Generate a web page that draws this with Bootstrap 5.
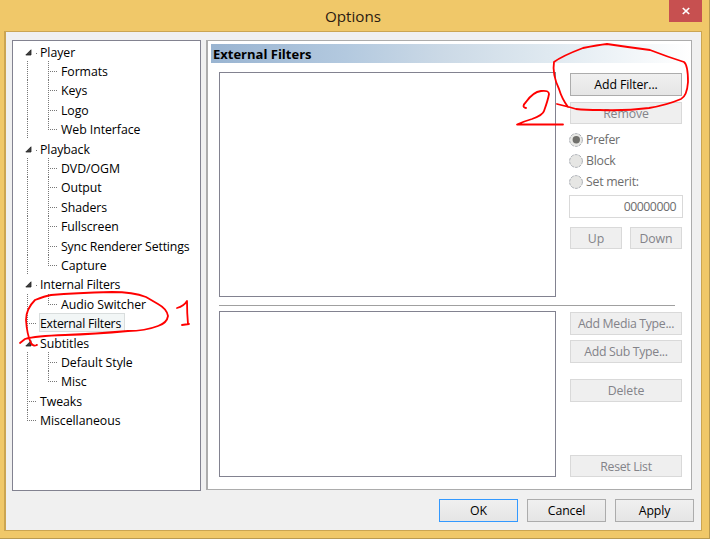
<!DOCTYPE html>
<html lang="en">
<head>
<meta charset="utf-8">
<title>Options</title>
<link href="https://cdn.jsdelivr.net/npm/bootstrap@5.3.0/dist/css/bootstrap.min.css" rel="stylesheet">
<style>
body{width:710px;height:539px;overflow:hidden;font:12.3px/19px "Open Sans","Noto Sans",sans-serif;color:#000;background:#f0c869}
.window{width:710px;height:539px;background:#f0c869;border:solid #b99a51;border-width:0 1px 1px 0}
.titlebar{height:31px}
.caption{font-size:15.2px;line-height:32px;padding-left:325px;color:#2b1b12}
.close-box{width:33px;height:22px;margin-right:7px;background:#c75050}
.client{height:500px;margin:0 7px 0 4px;background:#f0f0f0;border:1px solid #cba552;border-left-width:2px;padding:8px 7px 0 6px}
.tree{width:189px;height:451px;border:1px solid #828290;background:#fff;padding:1px 0 0 13px;letter-spacing:-.05px}
.tree li{height:19px;position:relative;white-space:nowrap;line-height:21px;padding-left:14px;--v:repeating-linear-gradient(#777 0 1px,transparent 1px 2px);--h:repeating-linear-gradient(90deg,#777 0 1px,transparent 1px 2px);background-repeat:no-repeat}
.tree li:nth-child(5n+3),.tree li:nth-child(5n){height:20px}
.tree .sub{padding-left:35px;background-image:var(--v),var(--v),var(--h);background-size:1px 100%,1px 100%,10px 1px;background-position:1px 0,22px 0,22px 10px}
.tree .sub.end{background-size:1px 100%,1px 11px,10px 1px}
.tree .leaf{background-image:var(--v),var(--h);background-size:1px 100%,10px 1px;background-position:1px 0,1px 10px}
.tree .leaf.end{background-size:1px 11px,10px 1px}
.tree .top{background-image:linear-gradient(#777,#777);background-size:1px 1px;background-position:10px 11px}
.tree .top svg{position:absolute;left:-1px;top:7px}
.tree .snug{letter-spacing:-.15px}
.picked{background:#f2f6f6;box-shadow:0 0 0 1px #d9dddd;display:inline-block;height:17px;line-height:19px;padding:0 3px 0 0;margin-top:1px;vertical-align:top;letter-spacing:-.25px}
.page{width:486px;height:450px;margin-left:5px;border:1px solid #acacac;border-left-width:2px;background:#fff;padding:3px 0 0 3px}
.page-title{height:19px;line-height:21px;font-weight:700;font-size:13px;padding-left:2px;background:linear-gradient(90deg,#99b4d1,#b3c9df 28%,#cbd9e6 48%,#dfe9f0 70%,#fff)}
.body-area{padding:9px 8px 0}
.pane{width:337px;border:1px solid #828290}
.pane-a{height:225px}
.pane-b{height:166px}
.rule{height:1px;width:456px;background:#a0a0a0;margin:8px 0 5px}
.side{margin-left:14px;width:112px;padding-top:1px}
.btn.pb{--edge:#acacac;border:0;border-radius:0;padding:1px 0 0;font-size:12.3px;line-height:22px;height:23px;width:112px;box-shadow:inset 0 0 0 1px var(--edge);background:linear-gradient(#f0f0f0,#e5e5e5);color:#000;white-space:nowrap;letter-spacing:-.1px;transition:none}
.btn.pb:disabled{--edge:#d9d9d9;opacity:1;background:#efefef;color:#838389}
.btn.pb.low{height:22px;line-height:21px}
.btn.pb.tight{letter-spacing:-.32px}
.btn.pb.half{width:52px}
.btn.pb.act{width:79px}
.btn.pb.main{--edge:#3399ff}
.remove{margin-top:6px}
.choices{margin-top:5px}
.opt{height:21px;line-height:21px;color:#6d6d6d;letter-spacing:-.25px}
.dot{width:14px;height:14px;margin:0 3px 0 -1px}
.merit{width:114px;height:23px;border:1px solid #d9d9d9;margin:3px 0 9px -1px;text-align:right;line-height:22px;padding-right:6px;color:#6d6d6d;letter-spacing:-.5px}
.sub-type{margin-top:5px}
.actions{gap:9px}
.ink{position:absolute;left:0;top:0;pointer-events:none}
</style>
</head>
<body>
<div class="window">
  <div class="titlebar d-flex justify-content-between align-items-start">
    <div class="caption">Options</div>
    <div class="close-box d-flex align-items-center justify-content-center"><svg width="8" height="8" viewBox="0 0 8 8"><path d="M.8 1l6.4 6M7.2 1L.8 7" stroke="#fff" stroke-width="1.7"/></svg></div>
  </div>
  <div class="client">
    <div class="d-flex">
      <ul class="tree list-unstyled mb-0">
        <li class="top"><svg width="7" height="7"><path d="M6 .8V6H.8z" fill="#404040" stroke="#222" stroke-width=".8"/></svg>Player</li>
        <li class="sub">Formats</li>
        <li class="sub">Keys</li>
        <li class="sub">Logo</li>
        <li class="sub end">Web Interface</li>
        <li class="top"><svg width="7" height="7"><path d="M6 .8V6H.8z" fill="#404040" stroke="#222" stroke-width=".8"/></svg>Playback</li>
        <li class="sub">DVD/OGM</li>
        <li class="sub">Output</li>
        <li class="sub">Shaders</li>
        <li class="sub">Fullscreen</li>
        <li class="sub snug">Sync Renderer Settings</li>
        <li class="sub end">Capture</li>
        <li class="top snug"><svg width="7" height="7"><path d="M6 .8V6H.8z" fill="#404040" stroke="#222" stroke-width=".8"/></svg>Internal Filters</li>
        <li class="sub end">Audio Switcher</li>
        <li class="leaf"><span class="picked">External Filters</span></li>
        <li class="top"><svg width="7" height="7"><path d="M6 .8V6H.8z" fill="#404040" stroke="#222" stroke-width=".8"/></svg>Subtitles</li>
        <li class="sub">Default Style</li>
        <li class="sub end">Misc</li>
        <li class="leaf">Tweaks</li>
        <li class="leaf end">Miscellaneous</li>
      </ul>
      <div class="page">
        <div class="page-title">External Filters</div>
        <div class="body-area">
          <div class="d-flex">
            <div class="pane pane-a"></div>
            <div class="side">
              <button class="btn pb d-block">Add Filter...</button>
              <button class="btn pb low d-block remove" disabled>Remove</button>
              <div class="choices">
                <div class="opt d-flex align-items-center"><svg class="dot" viewBox="0 0 14 14"><circle cx="7" cy="7" r="6.4" fill="#e9e9e6" stroke="#a9adb3" stroke-dasharray="3 1"/><circle cx="7.3" cy="6.8" r="3.7" fill="#70706c"/></svg>Prefer</div>
                <div class="opt d-flex align-items-center"><svg class="dot" viewBox="0 0 14 14"><circle cx="7" cy="7" r="6.4" fill="#e6e6e4" stroke="#a9adb3" stroke-dasharray="3 1"/></svg>Block</div>
                <div class="opt d-flex align-items-center"><svg class="dot" viewBox="0 0 14 14"><circle cx="7" cy="7" r="6.4" fill="#e6e6e4" stroke="#a9adb3" stroke-dasharray="3 1"/></svg>Set merit:</div>
              </div>
              <div class="merit">00000000</div>
              <div class="d-flex justify-content-between"><button class="btn pb low half" disabled>Up</button><button class="btn pb low half" disabled>Down</button></div>
            </div>
          </div>
          <div class="rule"></div>
          <div class="d-flex">
            <div class="pane pane-b"></div>
            <div class="side d-flex flex-column">
              <button class="btn pb tight" disabled>Add Media Type...</button>
              <button class="btn pb tight sub-type" disabled>Add Sub Type...</button>
              <button class="btn pb mt-3" disabled>Delete</button>
              <button class="btn pb low tight mt-auto" disabled>Reset List</button>
            </div>
          </div>
        </div>
      </div>
    </div>
    <div class="d-flex justify-content-end actions mt-2">
      <button class="btn pb act main">OK</button>
      <button class="btn pb act">Cancel</button>
      <button class="btn pb act">Apply</button>
    </div>
  </div>
</div>
<svg class="ink" width="710" height="539" fill="none" stroke="#f00" stroke-width="1.8" stroke-linecap="round" stroke-linejoin="round">
  <path d="M37 345Q33 347 31 343Q27 335 26 320Q26 309 35 300Q45 296 51 295Q75 293 112 292Q133 292 146 297L158 304Q167 309 168 316Q167 323 158 326Q145 331 128 331Q95 334 65 335Q35 336 25 339L20 343"/>
  <path d="M177 308Q184 306 187 301Q187 313 188 324M182 325L189 324"/>
  <path d="M568 107Q562 99 559 89Q552 74 554 62Q562 56 583 48Q598 45 607 44Q627 47 650 50Q668 57 684 62Q688 65 688 82Q687 96 681 99Q667 105 649 108Q625 111 600 110Q585 110 576 109L569 107L557 104"/>
  <path d="M526 108Q521 107 526 102Q533 92 541 91Q549 90 549 94Q548 100 544 111Q543 115 532 119Q525 121 517 124.500H563"/>
</svg>
<script src="https://cdn.jsdelivr.net/npm/bootstrap@5.3.0/dist/js/bootstrap.bundle.min.js"></script>
</body>
</html>
